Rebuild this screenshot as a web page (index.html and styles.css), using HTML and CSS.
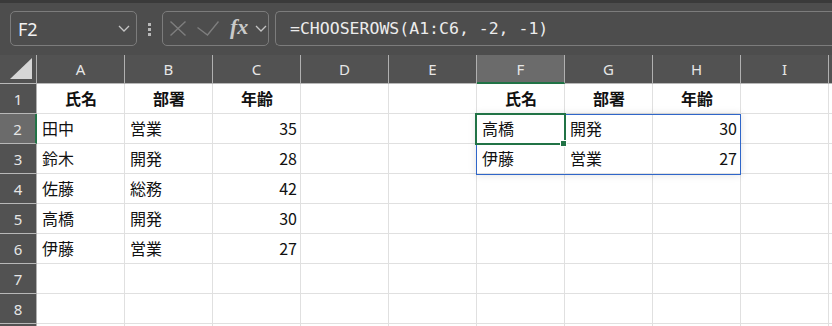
FILE: index.html
```html
<!DOCTYPE html>
<html lang="ja">
<head>
    <meta charset="UTF-8">
    <meta name="viewport" content="width=device-width, initial-scale=1.0">
    <title>CHOOSEROWS</title>
    <link rel="stylesheet" href="styles.css">
</head>
<body>
    <!-- Formula Bar -->
    <div class="formula-bar">
        <div class="name-box">
            <span class="cell-ref">F2</span>
            <svg class="chevron" width="12" height="7" viewBox="0 0 12 7"><path d="M1 1 L6 6 L11 1" /></svg>
        </div>
        <div class="grip"><i></i><i></i><i></i></div>
        <div class="fx-box">
            <svg class="cancel" width="16" height="15" viewBox="0 0 16 15"><path d="M0.5 0.5 L15.5 14.5 M15.5 0.5 L0.5 14.5" /></svg>
            <svg class="enter" width="22" height="15" viewBox="0 0 22 15"><path d="M0.5 6.5 L10.5 14 L21.5 0.5" /></svg>
            <span class="fx">fx</span>
            <svg class="chevron" width="12" height="7" viewBox="0 0 12 7"><path d="M1 1 L6 6 L11 1" /></svg>
        </div>
        <div class="formula">=CHOOSEROWS(A1:C6, -2, -1)</div>
    </div>

    <!-- Sheet -->
    <div class="sheet" id="sheet">
        <div class="spill"></div>
        <div class="active-cell"><span class="fill-handle"></span></div>
    </div>

    <script>
        document.addEventListener("DOMContentLoaded", function () {
            const sheet = document.getElementById("sheet");
            const cols = ["A", "B", "C", "D", "E", "F", "G", "H", "I", "J"];
            const data = {
                1: ["氏名", "部署", "年齢", "", "", "氏名", "部署", "年齢"],
                2: ["田中", "営業", "35", "", "", "高橋", "開発", "30"],
                3: ["鈴木", "開発", "28", "", "", "伊藤", "営業", "27"],
                4: ["佐藤", "総務", "42"],
                5: ["高橋", "開発", "30"],
                6: ["伊藤", "営業", "27"]
            };

            function addCell(cls, text) {
                const cell = document.createElement("div");
                cell.className = cls;
                cell.textContent = text;
                sheet.appendChild(cell);
                return cell;
            }

            // Column headers (J is only a sliver at the edge)
            addCell("corner", "");
            cols.forEach(function (c) {
                addCell(c === "F" ? "col-head selected" : "col-head", c === "J" ? "" : c);
            });

            // Rows (row 9 is only a sliver at the bottom)
            for (let r = 1; r <= 9; r++) {
                addCell(r === 2 ? "row-head selected" : "row-head", r === 9 ? "" : r);
                const row = data[r] || [];
                cols.forEach(function (c, i) {
                    const value = row[i] || "";
                    let cls = "cell";
                    if (r === 1) {
                        cls += " title";
                    } else if (/^\d+$/.test(value)) {
                        cls += " num";
                    }
                    addCell(cls, value);
                });
            }
        });
    </script>
</body>
</html>
```

FILE: styles.css
```css
body {
    margin: 0;
    width: 832px;
    height: 326px;
    overflow: hidden;
    background-color: #4d4d4d;
    font-family: "Noto Sans", sans-serif;
}

/* Formula bar */
.formula-bar {
    display: flex;
    align-items: flex-start;
    height: 55px;
    box-sizing: border-box;
    padding-top: 8px;
    padding-left: 10px;
    border-top: 3px solid #3a3a3a;
    background-color: #4d4d4d;
    overflow: hidden;
}
.name-box, .fx-box, .formula {
    height: 35px;
    box-sizing: border-box;
    border: 1px solid #7c7c7c;
    border-radius: 5px;
    display: flex;
    align-items: center;
}
.name-box {
    width: 127px;
    padding: 0 6px 0 7px;
    justify-content: space-between;
}
.cell-ref {
    color: #f2f2f2;
    font-size: 18px;
}
.chevron {
    fill: none;
    stroke: #c4c4c4;
    stroke-width: 1.3;
}
.grip {
    width: 25px;
    display: flex;
    flex-direction: column;
    align-items: center;
    gap: 2px;
    padding-top: 12px;
}
.grip i {
    width: 3px;
    height: 3px;
    background-color: #b8b8b8;
}
.fx-box {
    width: 107px;
    padding-left: 7px;
}
.cancel, .enter {
    fill: none;
    stroke: #7e7e7e;
    stroke-width: 1.4;
}
.enter {
    margin-left: 11px;
}
.fx {
    margin-left: 11px;
    color: #c9c9c9;
    font-family: "Liberation Serif", serif;
    font-style: italic;
    font-weight: bold;
    font-size: 22px;
    line-height: 1;
    margin-top: -3px;
}
.fx-box .chevron {
    margin-left: 7px;
}
.formula {
    margin-left: 6px;
    flex: 1;
    margin-right: -10px;
    border-radius: 5px 0 0 5px;
    border-right: none;
    padding-left: 14px;
    color: #ececec;
    font-family: "DejaVu Sans Mono", monospace;
    font-size: 16.5px;
}

/* Sheet grid */
.sheet {
    position: relative;
    width: 832px;
    height: 271px;
    overflow: hidden;
    display: grid;
    grid-template-columns: 37px repeat(10, 88px);
    grid-template-rows: 29px repeat(9, 30px);
    background-color: #ffffff;
    font-family: "Noto Sans CJK JP", sans-serif;
}
.corner, .col-head, .row-head {
    background-color: #525252;
    color: #e6e6e6;
    font-family: "Noto Sans", sans-serif;
    font-size: 15px;
    box-sizing: border-box;
    border-right: 1px solid #b0b0b0;
    border-bottom: 1px solid #b8b8b8;
    display: flex;
    align-items: center;
    justify-content: center;
}
.corner {
    position: relative;
}
.corner::after {
    content: "";
    position: absolute;
    right: 4px;
    bottom: 4px;
    width: 0;
    height: 0;
    border-left: 22px solid transparent;
    border-bottom: 21px solid #d6d6d6;
}
.col-head.selected {
    background-color: #6b6b6b;
    border-bottom: 2px solid #217346;
}
.row-head.selected {
    background-color: #6b6b6b;
    border-right: 2px solid #217346;
}
.cell {
    box-sizing: border-box;
    border-right: 1px solid #e0e0e0;
    border-bottom: 1px solid #e0e0e0;
    padding: 0 4px 0 5px;
    font-size: 16px;
    line-height: 29px;
    color: #111;
    white-space: nowrap;
    overflow: hidden;
}
.cell.title {
    font-weight: bold;
    text-align: center;
}
.cell.num {
    text-align: right;
    padding-right: 3px;
}

/* Spill range and active cell overlays */
.spill {
    position: absolute;
    left: 476px;
    top: 59px;
    width: 265px;
    height: 61px;
    box-sizing: border-box;
    border: 1px solid #2f66c9;
    box-shadow: 0 0 8px rgba(0, 0, 0, 0.12);
    z-index: 1;
}
.active-cell {
    position: absolute;
    left: 475px;
    top: 58px;
    width: 91px;
    height: 32px;
    box-sizing: border-box;
    border: 2px solid #217346;
    z-index: 2;
}
.fill-handle {
    position: absolute;
    right: -3px;
    bottom: -4px;
    width: 5px;
    height: 5px;
    background-color: #217346;
    border: 1px solid #ffffff;
}
```
